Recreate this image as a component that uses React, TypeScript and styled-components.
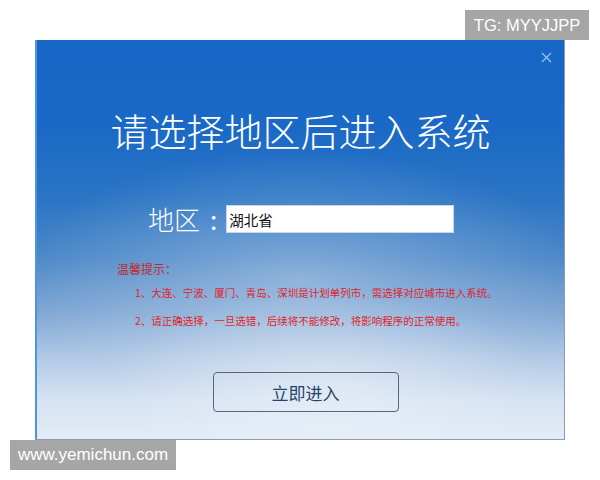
import styled, { createGlobalStyle } from "styled-components";

const GlobalStyle = createGlobalStyle`
  html, body {
    margin: 0;
    padding: 0;
    background: #ffffff;
  }
  body {
    font-family: "Noto Sans CJK SC", "Noto Sans", sans-serif;
  }
`;

const Page = styled.div`
  width: 600px;
  height: 480px;
  padding-top: 10px;
  box-sizing: border-box;
  display: flex;
  flex-direction: column;
`;

const TopBar = styled.div`
  display: flex;
  justify-content: flex-end;
  padding-right: 11px;
`;

const Badge = styled.div`
  width: 124px;
  height: 30px;
  background: #a6a6a6;
  color: #ffffff;
  font-family: "Liberation Sans", Arial, sans-serif;
  font-size: 16.5px;
  display: flex;
  align-items: center;
  justify-content: center;
`;

const Dialog = styled.div`
  position: relative;
  margin-left: 35px;
  width: 530px;
  height: 400px;
  box-sizing: border-box;
  border-left: 2px solid #4f94dc;
  border-right: 1px solid #8d9db4;
  border-bottom: 1px solid #8d9db4;
  background:
    radial-gradient(ellipse 280px 130px at 50% 60%, rgba(255, 255, 255, 0.3), rgba(255, 255, 255, 0) 100%),
    radial-gradient(ellipse 220px 90px at 55% 86%, rgba(255, 255, 255, 0.35), rgba(255, 255, 255, 0) 100%),
    linear-gradient(
      180deg,
      #1766c6 0%,
      #1a69c6 22%,
      #2b75c4 40%,
      #4d88c8 55%,
      #7ea6d4 68%,
      #b3cae6 80%,
      #d5e2f2 90%,
      #e3ecf6 100%
    );
  display: flex;
  flex-direction: column;
`;

const Close = styled.button`
  position: absolute;
  top: 10px;
  right: 11px;
  width: 14px;
  height: 14px;
  padding: 0;
  border: none;
  background: transparent;
  display: flex;
  align-items: center;
  justify-content: center;
`;

const Title = styled.h1`
  margin: 0;
  padding-top: 63px;
  text-align: center;
  color: #ffffff;
  font-size: 38px;
  font-weight: 300;
  line-height: 54px;
`;

const RegionRow = styled.div`
  display: flex;
  align-items: center;
  margin-top: 48px;
  padding-left: 111px;
`;

const RegionLabel = styled.span`
  color: #ffffff;
  font-size: 26px;
  line-height: 28px;
  font-weight: 300;
`;

const Colon = styled.span`
  color: #ffffff;
  font-size: 26px;
  line-height: 28px;
  margin: 0 9px 0 10px;
`;

const RegionInput = styled.div`
  width: 228px;
  height: 28px;
  box-sizing: border-box;
  background: #ffffff;
  border: 1px solid #c9d6e6;
  color: #111111;
  font-size: 14.5px;
  display: flex;
  align-items: center;
  padding-left: 2px;
`;

const Tips = styled.div`
  margin-top: 28px;
  padding-left: 80px;
  display: flex;
  flex-direction: column;
`;

const TipsHead = styled.div`
  color: #c2292a;
  font-size: 12px;
  line-height: 16px;
`;

const TipLine = styled.div<{ $gap: number }>`
  margin-top: ${(p) => p.$gap}px;
  padding-left: 18px;
  color: #e0242a;
  font-size: 10.5px;
  line-height: 18px;
  white-space: nowrap;
`;

const Footer = styled.div`
  display: flex;
  justify-content: center;
  margin-top: 42px;
  padding-left: 10px;
`;

const EnterButton = styled.button`
  width: 186px;
  height: 40px;
  box-sizing: border-box;
  border: 1.5px solid #56667c;
  border-radius: 4px;
  background: transparent;
  color: #24456a;
  font-family: "Noto Sans CJK SC", sans-serif;
  font-size: 17px;
  display: flex;
  align-items: center;
  justify-content: center;
`;

const Watermark = styled.div`
  margin-left: 10px;
  width: 166px;
  height: 30px;
  background: #a6a6a6;
  color: #ffffff;
  font-family: "Liberation Sans", Arial, sans-serif;
  font-size: 17px;
  display: flex;
  align-items: center;
  justify-content: center;
`;

export default function App() {
  return (
    <>
      <GlobalStyle />
      <Page>
        <TopBar>
          <Badge>TG: MYYJJPP</Badge>
        </TopBar>
        <Dialog>
          <Close aria-label="关闭">
            <svg width="11" height="11" viewBox="0 0 11 11">
              <path d="M1 1 L10 10 M10 1 L1 10" stroke="#9ccaf4" strokeWidth="1.1" fill="none" />
            </svg>
          </Close>
          <Title>请选择地区后进入系统</Title>
          <RegionRow>
            <RegionLabel>地区</RegionLabel>
            <Colon>:</Colon>
            <RegionInput>湖北省</RegionInput>
          </RegionRow>
          <Tips>
            <TipsHead>温馨提示：</TipsHead>
            <TipLine $gap={7}>1、大连、宁波、厦门、青岛、深圳是计划单列市，需选择对应城市进入系统。</TipLine>
            <TipLine $gap={10}>2、请正确选择，一旦选错，后续将不能修改，将影响程序的正常使用。</TipLine>
          </Tips>
          <Footer>
            <EnterButton>立即进入</EnterButton>
          </Footer>
        </Dialog>
        <Watermark>www.yemichun.com</Watermark>
      </Page>
    </>
  );
}
